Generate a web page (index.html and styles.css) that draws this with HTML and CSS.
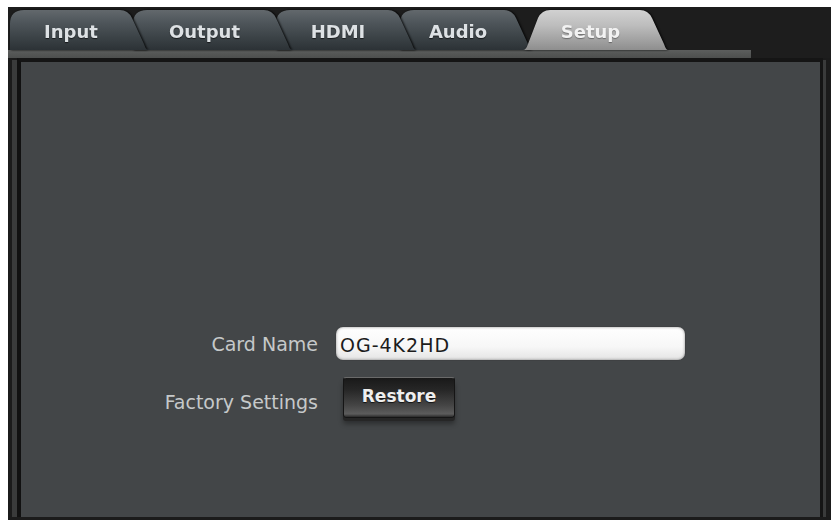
FILE: index.html
```html
<!DOCTYPE html>
<html>
<head>
<meta charset="utf-8">
<link rel="stylesheet" href="styles.css">
</head>
<body>
<div class="window">
  <div class="tabbar">
    <div class="tab tab-input"><div class="face">Input</div></div>
    <div class="tab tab-output"><div class="face">Output</div></div>
    <div class="tab tab-hdmi"><div class="face">HDMI</div></div>
    <div class="tab tab-audio"><div class="face">Audio</div></div>
    <div class="tab tab-setup active"><div class="face">Setup</div></div>
  </div>
  <div class="strip"></div>
  <div class="frame">
    <div class="rail"></div>
    <div class="panel">
      <div class="form">
        <label class="label" for="cardname">Card Name</label>
        <input id="cardname" class="field" type="text" value="OG-4K2HD">
        <div class="label label-low">Factory Settings</div>
        <div class="btn-wrap"><button class="btn">Restore</button></div>
      </div>
    </div>
    <div class="rail rail-right"></div>
  </div>
</div>
</body>
</html>
```

FILE: styles.css
```css
html, body {
  margin: 0;
  padding: 0;
  background: #ffffff;
  width: 831px;
  height: 520px;
  overflow: hidden;
}

.window {
  margin: 7px 0 0 8px;
  height: 513px;
  background: #1d1d1d;
  display: flex;
  flex-direction: column;
}

/* ---------- tabs ---------- */
.tabbar {
  height: 43px;
  padding: 2px 0 0 2px;
  box-sizing: border-box;
  display: flex;
  align-items: flex-end;
}

.tab {
  flex: none;
  height: 41px;
  position: relative;
  filter: drop-shadow(1px 0 1px rgba(0, 0, 0, 0.9));
}

.face {
  height: 100%;
  box-sizing: border-box;
  display: flex;
  align-items: center;
  justify-content: center;
  padding: 4px 16px 0 0;
  font-family: "DejaVu Sans", sans-serif;
  font-weight: bold;
  font-size: 18px;
  color: #dde1e4;
  text-shadow: 0 1px 1px rgba(0, 0, 0, 0.6);
  background: linear-gradient(#646a6e 0%, #50575c 30%, #3b4246 70%, #2c3236 100%);
}

.tab-input { width: 138px; margin-right: -15px; z-index: 5; }
.tab-output { width: 159px; margin-right: -16px; z-index: 4; }
.tab-hdmi { width: 140px; margin-right: -16px; z-index: 3; }
.tab-audio { width: 132px; margin-right: -9px; z-index: 2; }
.tab-setup { width: 145px; z-index: 6; }

.tab-input .face {
  clip-path: path("M0 41 L0 15 Q0 1 14 1 L110 1 Q118 1 122 9 L134 35 Q136 41 138 41 Z");
}
.tab-output .face {
  clip-path: path("M0 41 L0 15 Q0 1 14 1 L131 1 Q139 1 143 9 L155 35 Q157 41 159 41 Z");
}
.tab-hdmi .face {
  clip-path: path("M0 41 L0 15 Q0 1 14 1 L112 1 Q120 1 124 9 L136 35 Q138 41 140 41 Z");
}
.tab-audio .face {
  clip-path: path("M0 41 L0 15 Q0 1 14 1 L104 1 Q112 1 116 9 L128 35 Q130 41 132 41 Z");
}
.tab-setup .face {
  padding: 4px 10px 0 0;
  color: #f2f2f2;
  text-shadow: 0 1px 1px rgba(0, 0, 0, 0.35);
  background: linear-gradient(#d2d2d2 0%, #bdbdbd 40%, #a2a2a2 75%, #8e8e8e 100%);
  clip-path: path("M0 41 Q3 41 5 35 L15 9 Q19 1 27 1 L117 1 Q125 1 129 9 L141 35 Q143 41 145 41 Z");
}

.strip {
  height: 8px;
  margin-right: 80px;
  background: linear-gradient(#5c5e5d, #4d4f4e);
}

/* ---------- frame & panel ---------- */
.frame {
  flex: 1;
  display: flex;
  padding: 0 5px 3px 4px;
  background: #1b1b1b;
}

.rail {
  width: 5px;
  margin-top: 2px;
  background: #3a3b3b;
}

.rail-right {
  width: 3px;
}

.panel {
  flex: 1;
  background: #434648;
  border-left: 4px solid #111111;
  border-top: 4px solid #151515;
  border-right: 3px solid #151515;
  padding-top: 265px;
}

/* ---------- form ---------- */
.form {
  display: grid;
  grid-template-columns: 297px 349px;
  column-gap: 18px;
  row-gap: 17px;
  align-items: center;
}

.label {
  justify-self: end;
  font-family: "DejaVu Sans", sans-serif;
  font-size: 19px;
  color: #c6c9ca;
}

.label-low {
  padding-top: 8px;
}

.field {
  height: 33px;
  box-sizing: border-box;
  border: none;
  border-radius: 7px;
  padding: 2px 0 0 4px;
  margin: 0;
  width: 100%;
  font-family: "DejaVu Sans", sans-serif;
  font-size: 19px;
  letter-spacing: 1px;
  color: #1c1c1c;
  background: linear-gradient(#ffffff 0%, #f7f7f7 60%, #e4e4e4 100%);
  box-shadow: inset 0 0 3px rgba(0, 0, 0, 0.45), 0 0 1px rgba(0, 0, 0, 0.6);
  outline: none;
}

.btn-wrap {
  padding-left: 7px;
}

.btn {
  width: 112px;
  height: 41px;
  margin: 0;
  padding: 0 0 3px 0;
  border: 1px solid #151515;
  border-top-color: #6a6a6a;
  border-radius: 3px;
  font-family: "DejaVu Sans", sans-serif;
  font-weight: bold;
  font-size: 17px;
  color: #eeeeee;
  text-shadow: 0 1px 1px rgba(0, 0, 0, 0.7);
  background: linear-gradient(#191919 0%, #262626 30%, #454545 70%, #5c5c5c 92%, #2a2a2a 100%);
  box-shadow: 0 3px 0 #262626, 0 6px 5px rgba(0, 0, 0, 0.35);
}
```
